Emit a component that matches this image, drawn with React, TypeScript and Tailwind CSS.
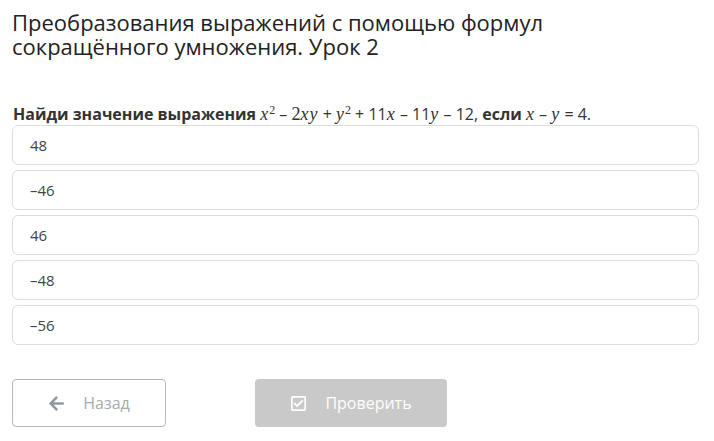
import { FaArrowLeft, FaRegCheckSquare } from "react-icons/fa";

const V = ({ children }: { children: React.ReactNode }) => (
  <span
    className="italic font-normal text-[18px] tracking-[1px]"
    style={{ fontFamily: '"Liberation Serif", serif' }}
  >
    {children}
  </span>
);

const Sup = () => (
  <sup className="text-[12px] font-normal" style={{ fontFamily: '"Liberation Serif", serif' }}>
    2
  </sup>
);

const options = ["48", "–46", "46", "–48", "–56"];

export default function App() {
  return (
    <div
      className="w-[714px] h-[441px] bg-white text-[#333] px-[12px] pt-[10px]"
      style={{ fontFamily: '"Open Sans", sans-serif' }}
    >
      <h1 className="text-[22px] leading-[24px] text-[#222]">
        Преобразования выражений с помощью формул
        <br />
        сокращённого умножения. Урок 2
      </h1>
      <p className="mt-[46px] text-[16px] leading-[20px] pl-px text-[#333] whitespace-nowrap">
        <b>Найди значение выражения </b>
        <V>x</V>
        <Sup /> – <span style={{ fontFamily: '"Liberation Serif", serif' }} className="text-[18px]">2</span>
        <V>xy</V> + <V>y</V>
        <Sup /> + 11<V>x</V> – 11<V>y</V> – 12, <b>если</b> <V>x</V> – <V>y</V> = 4.
      </p>
      <div className="mt-[1px] flex flex-col gap-[5px] w-[687px]">
        {options.map((o) => (
          <div
            key={o}
            className="h-[40px] border border-[#ddd] rounded-[6px] flex items-center pl-[17px] text-[15px] text-[#444]"
          >
            {o}
          </div>
        ))}
      </div>
      <div className="mt-[34px] flex items-center">
        <button className="w-[154px] h-[48px] border border-[#b5b8ba] rounded-[4px] flex items-center justify-center gap-[18px] text-[16px] text-[#a3acb2]">
          <FaArrowLeft className="text-[#8e9aa2] w-[17px] h-[17px]" />
          Назад
        </button>
        <button className="ml-[89px] w-[192px] h-[48px] rounded-[4px] bg-[#c9c9c9] flex items-center justify-center gap-[18px] text-[16px] text-white">
          <FaRegCheckSquare className="w-[17px] h-[17px]" />
          Проверить
        </button>
      </div>
    </div>
  );
}
